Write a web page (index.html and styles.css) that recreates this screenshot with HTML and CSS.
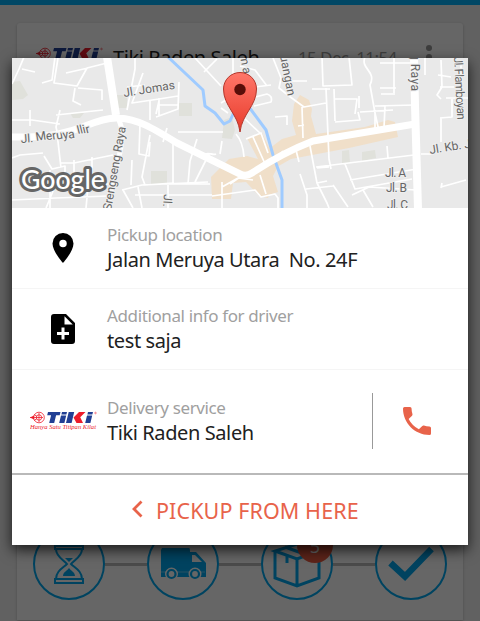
FILE: index.html
```html
<!DOCTYPE html>
<html lang="en">
<head>
<meta charset="utf-8">
<title>Pickup</title>
<link rel="stylesheet" href="styles.css">
</head>
<body>
<svg class="defs" width="0" height="0">
  <symbol id="tiki" viewBox="0 0 68 20">
    <g fill="none" stroke="#ed1c2b" stroke-width=".8"><circle cx="9" cy="6.500" r="5.300"/><circle cx="9" cy="6.500" r="2.700"/><path d="M0 6.500h13M9 2v9M4 3.500l3 2M4 9.500l3-2"/></g>
    <path d="M0 6.500l4-2v4z" fill="#ed1c2b"/>
    <g fill="#213f94"><path d="M18 1h12.500l-.8 3.200h-3.600L24.200 12h-5l1.900-7.800h-3.900zM31 4.500h5.200L34.400 12h-5.200zM32 1h5l-.6 2.400h-5zM38.700 1h5.500l-2.600 11H36zM57 4.500h5.200L60.400 12h-5.200zM58 1h5l-.6 2.400h-5z"/></g>
    <path d="M49 1h6.500l-5.300 5.200L53 12h-6.500l-3-5.600z" fill="#ed1c2b"/>
    <circle cx="65.500" cy="2" r=".8" fill="none" stroke="#ed1c2b" stroke-width=".5"/>
    <text class="slogan" x="0" y="18" textLength="66" lengthAdjust="spacingAndGlyphs">Hanya Satu Titipan Kilat</text>
  </symbol>
</svg>

<div class="page">
  <header class="topbar"></header>
  <article class="card">
    <div class="card-head">
      <svg class="card-logo" viewBox="0 0 68 20"><use href="#tiki"/></svg>
      <span class="card-title">Tiki Raden Saleh</span>
      <span class="card-date">15 Dec, 11:54</span>
      <span class="dots"><i></i><i></i><i></i></span>
    </div>
    <div class="steps">
      <div class="step"><svg viewBox="0 0 72 72"><g fill="none" stroke="#00a9f0" stroke-width="2"><path d="M22 18h28M22 15v6h28v-6M23 21c0 8 8 11 11 15-4 4-11 7-11 15M49 21c0 8-8 11-11 15 4 4 11 7 11 15M22 51h28v4H22z"/></g><path d="M32 30h8l-4 4zM30 48c0-4 4-5 6-8 2 3 6 4 6 8z" fill="#00a9f0"/></svg></div>
      <span class="line"></span>
      <div class="step"><svg viewBox="0 0 72 72"><path d="M15 20h27q1 0 1 4h6l10 11v14H14V22z" fill="#00a9f0"/><path d="M45 27h3l7 7H45z" fill="#fff"/><path d="M14 44h44" stroke="#fff" stroke-width=".4"/><g fill="#fff" stroke="#fff" stroke-width="5"><circle cx="24.500" cy="46" r="4"/><circle cx="48" cy="46" r="4"/></g><g fill="#fff" stroke="#00a9f0" stroke-width="2.200"><circle cx="24.500" cy="46" r="4"/><circle cx="48" cy="46" r="4"/></g></svg></div>
      <span class="line"></span>
      <div class="step"><svg viewBox="0 0 72 72"><g fill="none" stroke="#00a9f0" stroke-width="3"><path d="M14 23l22 8 22-8-22-7zM14 22v28l22 8 22-8V22M36 31v27M24 19l22 8M26 28v7"/></g></svg><b class="badge">5</b></div>
      <span class="line"></span>
      <div class="step"><svg viewBox="0 0 72 72"><path d="M15.500 35L30 48.500 56.500 21" fill="none" stroke="#00a9f0" stroke-width="6.500"/></svg></div>
    </div>
  </article>
</div>

<div class="overlay">
  <section class="dialog">
    <svg class="map" viewBox="12 58 456 150">
      <path d="M12 58h456v150H12z" fill="#e9e9e9"/>
      <g fill="#e0e1db"><path d="M12 82l8-1 8 14-5 4-11 1zM116 95h11v13h-11zM179 103h13v13h-13zM70 113h14l-4 5h-7zM151 171h16v13h-16zM224 120l8-3 3 13-3 9-10-1zM342 151l7-1 1 13h-8zM362 152l13-2 1 8-14 3z"/></g>
      <g fill="#f0dfc9"><path d="M211 177l18-18 18-3 11 3-11-21 15-5 16 33-5 10 5 16-9 3-1 3-9-2-13-14-13 1-2 16h-19z"/><path d="M270 148l12-9 14-4-4-14 2-17 6-9 9 5 3 9-1 7 5 18 49-7 23-7 7 2 3 15-49 11-58 11-16 9-6 11-17-3z"/></g>
      <path class="river" d="M168 57l35 33 2 16 10 7 9 11 6-3 4-9v-9l7-3 8 7 17 23 7 25 9 25v28"/>
      <g class="small">
        <path d="M12 84l7-15 5-12M22 69l13 3M55 57l-3 23-10 3M58 58l-4 25 23 3 10-18 20-5M66 73l22-5M75 88l-2 13 8 4M78 88l24 2v10M12 120h20l28 4M30 110v16M60 110l-4 17 2 9M56 115l47-5M135 57v12l-8 41M143 73l-11 30 27-4 19-3M127 87l18-2M150 100v20M159 98v18M159 101l-3 13M179 82l-1 27-22 8M178 105h-20M195 58l26 28M204 72l13-13M233 58v20M12 158l8-3 23-2M44 156l8 13 13-3v20M57 133l4 35M61 163h13l39-8M74 160v24h38M92 157v17M88 187l-2 21M50 170v38M12 200l44-2 52-2M56 184l-10 24M140 124l-1 30 10 2 1-14M150 135l-8 42 3 8 28-2M167 128l-4 14M132 160l-1 25M197 139l-7 22-2 23M209 154l-14 28M173 142v42h37M122 190l20-5 66-3M123 190l10 18M138 187l4 21M135 195h77M168 185v23M204 155c4-4 8 1 12-1M178 132h45M222 141l-2 13M222 187l16-9 15 2M222 182v26M230 184l10-7M236 134q7 8 8 23"/>
        <path d="M240 66l15 4 12 16M221 103l5-3M221 108l7 5M255 87l16-2M252 98l15-4q6 2 4 8l-17 4M273 58l8 20-2 10 10 8 15 11 22-4M302 107l1 31M275 117l12-1v9M298 126l6-1M288 81h19M322 57l1 29 29-1-3-28M312 89h18M326 88l3 71 2 10M334 89l1 32M335 99h22l-2 15M359 96v12M335 122l25-2-2-8M365 57c-5 12 12 14 5 28l5 28 4 18M360 112l33-2M394 57v36M381 94h14M375 112v16M385 106l-1 22M380 88h16M380 63h32M375 106l40-1M246 139l15-6 7 20M253 137l13 29M244 118l17 16M260 175l6 19M283 151l-3 4M296 150l3 12M310 146l7 37 10 20 2 5M317 168l12-1M345 164l10 25 57-10M316 167l98-12M317 183l10-2M300 174l7 21v13M306 189l27-3M333 185l15 22M350 180l67-11M352 195l17-8 47 3M363 190l10 17M387 146l1 12M212 196l43-6 6 7 14-3 3 4v10M421 154h13M442 183l-1 5M441 187l25-7M441 60l1 27-5 8 4 4M438 75l13 2M440 87h14M446 98h22M441 118v24M452 99v18l-12 1M461 60v60M425 57v18"/>
      </g>
      <g class="road"><path stroke-width="8" d="M107 57l9 58M414 57l1 48 3 104"/><path stroke-width="7" d="M10 137h18q30 0 57-11 22-9 34-8c18 1 32 9 58 25l63 31q6 3 12-1 30-20 61-32l102-17"/><path stroke-width="5" d="M118 117l4 12q1 17-7 43l-8 38"/></g>
      <g class="label">
        <text transform="translate(124 97) rotate(-9)" textLength="52">Jl. Jomas</text>
        <text transform="translate(21 143) rotate(-4)" textLength="70"><tspan>Jl. </tspan><tspan rotate="-5" dy="-1">Meruya</tspan><tspan rotate="-10" dy="-4"> Ilir</tspan></text>
        <text transform="translate(111 211) rotate(-80)" textLength="85">Srengseng Raya</text>
        <text transform="translate(164 194) rotate(94)">Jl. J</text>
        <text transform="translate(238 46) rotate(79)" textLength="29">Sma</text>
        <text transform="translate(280 56) rotate(79)" textLength="41">uangan</text>
        <text transform="translate(411 53) rotate(90)" textLength="38">g Raya</text>
        <text transform="translate(454 57) rotate(87)" textLength="63">Jl. Flamboyan</text>
        <text transform="translate(430 154) rotate(-9)" textLength="48">Jl. Kb. Je</text>
        <text x="385" y="177" textLength="21">Jl. A</text><text x="386" y="192" textLength="21">Jl. B</text><text x="387" y="209" textLength="21">Jl. C</text>
      </g>
      <text class="google" x="21" y="189" textLength="84" lengthAdjust="spacingAndGlyphs">Google</text>
      <defs><linearGradient id="pin" x2="0" y2="1"><stop stop-color="#ff776a"/><stop offset="1" stop-color="#e83b2b"/></linearGradient></defs>
      <path d="M240 132c-2-18-16.500-26-16.500-43a16.500 16.500 0 0 1 33 0c0 17-14.500 25-16.500 43z" fill="url(#pin)" stroke="#b3372c"/><circle cx="240" cy="89.500" r="5.700" fill="#590e09"/>
    </svg>
    <div class="row">
      <div class="icon"><svg class="place" viewBox="5 2 14 20"><path d="M12 2a7 7 0 0 0-7 7c0 5.250 7 13 7 13s7-7.750 7-13a7 7 0 0 0-7-7zm0 9.500a2.500 2.500 0 1 1 0-5 2.500 2.500 0 0 1 0 5z"/></svg></div>
      <div class="copy"><span class="key">Pickup location</span><span class="value">Jalan Meruya Utara&nbsp; No. 24F</span></div>
    </div>
    <div class="row">
      <div class="icon"><svg class="note" viewBox="4 2 16 20"><path d="M14 2H6a2 2 0 0 0-2 2v16a2 2 0 0 0 2 2h12a2 2 0 0 0 2-2V8zm2 14h-3v3h-2v-3H8v-2h3v-3h2v3h3zm-3-7V3.500L18.500 9z"/></svg></div>
      <div class="copy"><span class="key">Additional info for driver</span><span class="value">test saja</span></div>
    </div>
    <div class="row service">
      <div class="icon"><svg class="logo" viewBox="0 0 68 20"><use href="#tiki"/></svg></div>
      <div class="copy"><span class="key">Delivery service</span><span class="value">Tiki Raden Saleh</span></div>
      <div class="call"><svg viewBox="3 3 18 18"><path d="M6.620 10.790a15.150 15.150 0 0 0 6.590 6.590l2.200-2.200a1 1 0 0 1 1.020-.24c1.120.37 2.330.57 3.570.57a1 1 0 0 1 1 1V20a1 1 0 0 1-1 1C10.610 21 3 13.390 3 4a1 1 0 0 1 1-1h3.500a1 1 0 0 1 1 1c0 1.250.2 2.450.57 3.570a1 1 0 0 1-.25 1.020z"/></svg></div>
    </div>
    <div class="action"><svg viewBox="0 0 12 18"><path d="M10.500 1.500L3 9l7.500 7.500"/></svg><span>PICKUP FROM HERE</span></div>
  </section>
</div>
</body>
</html>
```

FILE: styles.css
```css
* { box-sizing: border-box; }
body { margin: 0; width: 480px; height: 621px; overflow: hidden; font-family: "Noto Sans", sans-serif; background: #f3f3f3; }
.defs { position: absolute; }
.slogan { font: italic 6.8px "Liberation Serif", serif; fill: #ed1c2b; }
.page { height: 621px; display: flex; flex-direction: column; }
.topbar { height: 5px; background: #00b2fc; flex: none; }
.card { margin: 18px 17px 0; height: 597px; padding: 0 16px; background: #fff; border-radius: 3px 3px 0 0; box-shadow: 0 1px 3px rgba(0,0,0,.25); display: flex; flex-direction: column; justify-content: space-between; }
.card-head { display: flex; align-items: center; height: 68px; padding-left: 3px; }
.card-logo { width: 68px; height: 20px; margin-right: 9px; }
.card-title { font-size: 20px; letter-spacing: -.42px; width: 185px; white-space: nowrap; color: #222; }
.card-date { font-size: 17px; letter-spacing: -.6px; color: #999; width: 123px; white-space: nowrap; }
.dots { display: flex; flex-direction: column; gap: 3px; padding-left: 5px; }
.dots i { width: 6px; height: 6px; border-radius: 50%; background: #999; }
.steps { display: flex; align-items: center; margin-bottom: 20px; }
.step { width: 72px; height: 72px; border: 2px solid #00a9f0; border-radius: 50%; position: relative; flex: none; }
.step svg { width: 72px; height: 72px; margin: -2px; display: block; }
.line { width: 42px; height: 3px; background: #bbb; flex: none; }
.badge { position: absolute; left: 34px; top: -3px; width: 36px; height: 36px; border-radius: 50%; background: #e95b42; color: #fff; font-size: 18px; font-weight: 400; line-height: 39px; text-align: center; }
.overlay { position: absolute; inset: 0; background: rgba(0,0,0,.6); padding: 58px 12px 0; }
.dialog { height: 487px; background: #fff; box-shadow: 0 5px 13px rgba(0,0,0,.75); display: flex; flex-direction: column; }
.map { display: block; width: 456px; height: 150px; flex: none; }
.small { fill: none; stroke: #fff; stroke-width: 1.7; stroke-linejoin: round; }
.road { fill: none; stroke: #fff; stroke-linejoin: round; }
.river { fill: none; stroke: #9fcbff; stroke-width: 3; stroke-linejoin: round; }
.label { font: 12px Roboto, sans-serif; fill: #666; stroke: #eee; stroke-width: 2px; paint-order: stroke; }
.google { font: 500 27px Lato, sans-serif; fill: #fff; stroke: #666; stroke-width: 6px; stroke-linejoin: round; paint-order: stroke; }
.row { height: 81px; display: flex; border-bottom: 1px solid #f5f5f5; flex: none; }
.icon { width: 95px; padding-left: 7px; display: flex; justify-content: center; align-items: center; }
.place { width: 22px; height: 30px; }
.note { width: 24px; height: 30px; }
.copy { display: flex; flex-direction: column; justify-content: center; white-space: pre; flex: 1; }
.key { font-size: 17px; line-height: 23px; color: #a0a0a0; letter-spacing: -.38px; }
.value { font-size: 20px; line-height: 27px; color: #212121; letter-spacing: -.4px; }
.service { height: 105px; border-bottom: 2px solid #b9b9b9; }
.service .copy { padding-bottom: 2px; }
.service .icon { padding: 0 0 1px 8px; }
.logo { width: 68px; height: 20px; }
.call { width: 96px; height: 56px; margin-top: 23px; border-left: 1px solid #999; display: flex; align-items: center; padding-left: 30px; }
.call svg { width: 28px; height: 28px; fill: #e8634a; }
.action { flex: 1; display: flex; align-items: center; padding-left: 119px; color: #e8634a; font-size: 21.5px; letter-spacing: .1px; white-space: nowrap; }
.action svg { width: 12px; height: 18px; margin: 0 13px 2px 0; fill: none; stroke: #e8634a; stroke-width: 2.800; }
```
